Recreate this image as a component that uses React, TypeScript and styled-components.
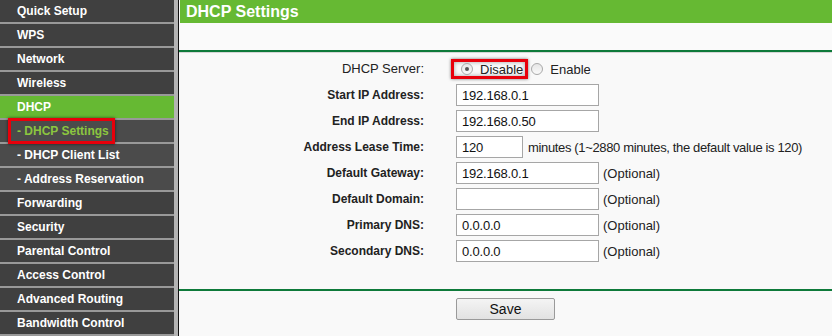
import styled, { createGlobalStyle } from 'styled-components';

const GlobalStyle = createGlobalStyle`
  html, body {
    margin: 0;
    padding: 0;
    background: #f9f9f9;
  }
  body {
    font-family: "Liberation Sans", Arial, sans-serif;
  }
`;

const Page = styled.div`
  display: flex;
  width: 832px;
  height: 336px;
  overflow: hidden;
`;

const Sidebar = styled.nav`
  position: relative;
  width: 174px;
  flex-shrink: 0;
  background: #404040;
  border-right: 4px solid #b3b3b3;
`;

const MenuItem = styled.div<{ $active?: boolean; $sub?: boolean; $current?: boolean }>`
  height: 22px;
  line-height: 22px;
  padding-left: 17px;
  border-bottom: 2px solid #999;
  font-size: 12px;
  font-weight: bold;
  white-space: nowrap;
  color: ${(p) => (p.$current ? '#8cc63f' : '#fff')};
  background: ${(p) => (p.$active ? '#66b933' : p.$sub ? '#4b4b4b' : '#404040')};
`;

const MenuMark = styled.div`
  position: absolute;
  left: 8px;
  top: 118px;
  width: 101px;
  height: 20px;
  border: 3px solid #e8000b;
  box-shadow: 0 0 3px rgba(0, 0, 0, 0.6);
  pointer-events: none;
`;

const Main = styled.main`
  flex: 1;
  border-left: 1px solid #111;
  background: #f9f9f9;
  display: flex;
  flex-direction: column;
`;

const Header = styled.h1`
  margin: 0 0 0 1px;
  height: 23px;
  line-height: 23px;
  padding-left: 6px;
  background: #66b933;
  color: #fff;
  font-size: 16px;
  font-weight: bold;
`;

const Spacer = styled.div`
  height: 27px;
  background: #fafafa;
`;

const Section = styled.section`
  border-top: 2px solid #0e7a3a;
  box-shadow: inset 0 1px 0 #d6d6d6;
  padding: 6px 0 27px;
`;

const FormGrid = styled.div`
  display: grid;
  grid-template-columns: 245px auto;
  column-gap: 32px;
  row-gap: 4px;
`;

const Label = styled.label<{ $plain?: boolean }>`
  height: 22px;
  line-height: 22px;
  text-align: right;
  font-size: ${(p) => (p.$plain ? '13px' : '12px')};
  font-weight: ${(p) => (p.$plain ? 'normal' : 'bold')};
  color: #222;
`;

const Field = styled.div`
  display: flex;
  align-items: center;
  height: 22px;
  gap: 4px;
  font-size: 13px;
  color: #222;
`;

const TextInput = styled.input<{ $w?: number }>`
  box-sizing: border-box;
  width: ${(p) => p.$w ?? 143}px;
  height: 22px;
  margin: 0;
  padding: 1px 5px 0;
  border: 1px solid #a6a6a6;
  background: #fff;
  font-family: "Liberation Sans", Arial, sans-serif;
  font-size: 13px;
  letter-spacing: -0.2px;
  color: #111;
  outline: none;
`;

const Note = styled.span<{ $gap?: number; $tight?: boolean }>`
  margin-left: ${(p) => p.$gap ?? 0}px;
  white-space: nowrap;
  letter-spacing: ${(p) => (p.$tight ? '-0.35px' : '0')};
`;

const RadioGroup = styled.div`
  display: flex;
  align-items: center;
  margin-left: -5px;
`;

const Marked = styled.span`
  display: inline-flex;
  align-items: center;
  height: 14px;
  padding: 0 2px 0 7px;
  border: 3px solid #e8000b;
  box-shadow: 0 0 3px rgba(0, 0, 0, 0.55), inset 0 0 4px rgba(0, 0, 0, 0.35);
`;

const RadioOption = styled.span<{ $first?: boolean }>`
  display: inline-flex;
  align-items: center;
  gap: 7px;
  margin-left: ${(p) => (p.$first ? 0 : 3)}px;
`;

const Radio = styled.span<{ $checked?: boolean }>`
  box-sizing: border-box;
  display: inline-block;
  position: relative;
  width: 12px;
  height: 12px;
  border-radius: 50%;
  border: 1px solid #a9a9a9;
  background: linear-gradient(#e6e6e6, #fafafa);

  &::after {
    content: '';
    display: ${(p) => (p.$checked ? 'block' : 'none')};
    position: absolute;
    left: 3px;
    top: 3px;
    width: 4px;
    height: 4px;
    border-radius: 50%;
    background: #555;
  }
`;

const SaveRow = styled.div`
  border-top: 2px solid #0e7a3a;
  padding: 7px 0 0 277px;
`;

const SaveButton = styled.button`
  width: 99px;
  height: 22px;
  border: 1px solid #9a9a9a;
  border-radius: 2px;
  background: linear-gradient(#f4f4f4, #e2e2e2);
  font-family: "Liberation Sans", Arial, sans-serif;
  font-size: 14px;
  color: #111;
  padding: 0;
`;

const menu = [
  { label: 'Quick Setup' },
  { label: 'WPS' },
  { label: 'Network' },
  { label: 'Wireless' },
  { label: 'DHCP', active: true },
  { label: '- DHCP Settings', sub: true, current: true },
  { label: '- DHCP Client List', sub: true },
  { label: '- Address Reservation', sub: true },
  { label: 'Forwarding' },
  { label: 'Security' },
  { label: 'Parental Control' },
  { label: 'Access Control' },
  { label: 'Advanced Routing' },
  { label: 'Bandwidth Control' },
];

const fields = [
  { label: 'Start IP Address:', value: '192.168.0.1' },
  { label: 'End IP Address:', value: '192.168.0.50' },
  { label: 'Address Lease Time:', value: '120', width: 67, note: 'minutes (1~2880 minutes, the default value is 120)' },
  { label: 'Default Gateway:', value: '192.168.0.1', note: '(Optional)' },
  { label: 'Default Domain:', value: '', note: '(Optional)' },
  { label: 'Primary DNS:', value: '0.0.0.0', note: '(Optional)' },
  { label: 'Secondary DNS:', value: '0.0.0.0', note: '(Optional)' },
];

export default function App() {
  return (
    <>
      <GlobalStyle />
      <Page>
        <Sidebar>
          {menu.map((m) => (
            <MenuItem key={m.label} $active={m.active} $sub={m.sub} $current={m.current}>
              {m.label}
            </MenuItem>
          ))}
          <MenuMark />
        </Sidebar>

        <Main>
          <Header>DHCP Settings</Header>
          <Spacer />
          <Section>
            <FormGrid>
              <Label $plain>DHCP Server:</Label>
              <Field>
                <RadioGroup>
                  <Marked>
                    <RadioOption $first>
                      <Radio $checked />
                      Disable
                    </RadioOption>
                  </Marked>
                  <RadioOption>
                    <Radio />
                    Enable
                  </RadioOption>
                </RadioGroup>
              </Field>

              {fields.map((f) => [
                <Label key={f.label + '-l'}>{f.label}</Label>,
                <Field key={f.label + '-f'}>
                  <TextInput $w={f.width} defaultValue={f.value} />
                  {f.note && (
                    <Note $gap={f.width ? 1 : 0} $tight={!!f.width}>
                      {f.note}
                    </Note>
                  )}
                </Field>,
              ])}
            </FormGrid>
          </Section>
          <SaveRow>
            <SaveButton>Save</SaveButton>
          </SaveRow>
        </Main>
      </Page>
    </>
  );
}
